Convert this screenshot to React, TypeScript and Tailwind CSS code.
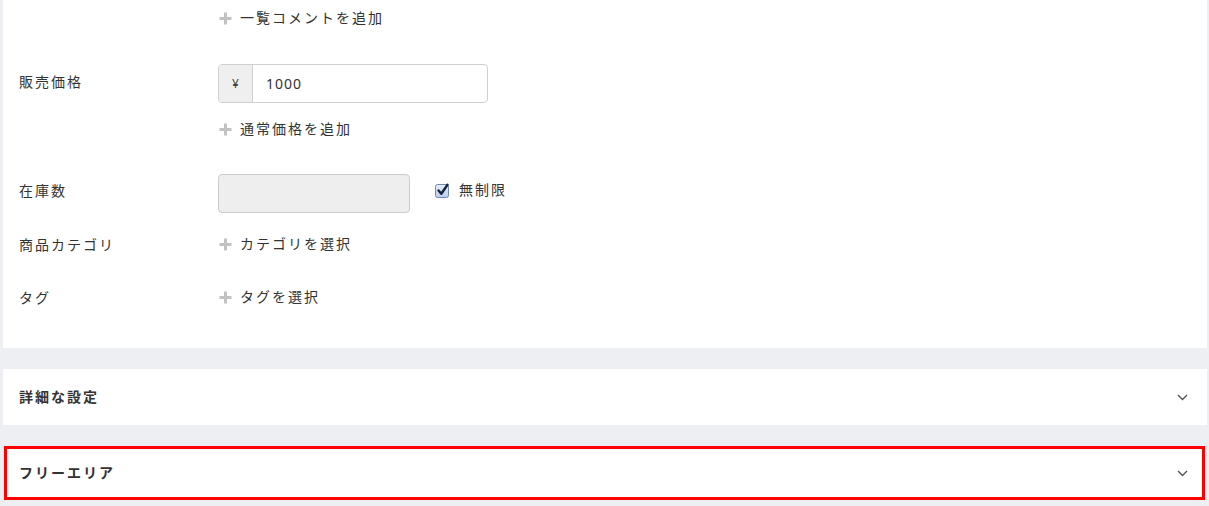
import React from "react";

const font = { fontFamily: '"Noto Sans", "Noto Sans CJK JP", sans-serif' };

function Plus() {
  return (
    <svg width="13" height="13" viewBox="0 0 13 13" className="shrink-0">
      <rect x="5" y="0.5" width="3" height="12" fill="#c2c2c2" />
      <rect x="0.5" y="5" width="12" height="3" fill="#c2c2c2" />
    </svg>
  );
}

function AddLink({ text }: { text: string }) {
  return (
    <div className="flex items-center gap-[8px] h-[20px] text-[14px] leading-[20px] text-[#333] pl-px">
      <Plus />
      <span>{text}</span>
    </div>
  );
}

function Chevron() {
  return (
    <svg width="11" height="7" viewBox="0 0 11 7">
      <polyline points="1,1 5.5,5.5 10,1" fill="none" stroke="#555" strokeWidth="1.4" />
    </svg>
  );
}

function Check() {
  return (
    <svg width="15" height="15" viewBox="0 0 15 15">
      <defs>
        <linearGradient id="cb" x1="0" y1="0" x2="0" y2="1">
          <stop offset="0" stopColor="#e6eefa" />
          <stop offset="1" stopColor="#b9cdea" />
        </linearGradient>
      </defs>
      <rect x="0.5" y="1.5" width="13" height="13" rx="2" fill="url(#cb)" stroke="#6f88b0" />
      <polyline points="3.5,7.5 6.3,10.8 12.5,1.8" fill="none" stroke="#14233f" strokeWidth="2.4" strokeLinecap="round" strokeLinejoin="round" />
    </svg>
  );
}

export default function App() {
  return (
    <div className="w-[1209px] h-[506px] bg-[#eeeff3] overflow-hidden text-[#333] tracking-[2px]" style={font}>
      <div className="ml-[3px] mr-[2px] bg-white h-[348px] pt-[8px] pl-[16px]">
        <div className="flex">
          <div className="w-[199px] shrink-0" />
          <AddLink text="一覧コメントを追加" />
        </div>

        <div className="flex mt-[36px]">
          <div className="w-[199px] shrink-0 text-[14px] leading-[20px] mt-[8px]">販売価格</div>
          <div className="flex flex-col">
            <div className="flex w-[270px] h-[39px] border border-[#cfcfcf] rounded-[4px] overflow-hidden">
              <div className="w-[34px] bg-[#efefef] border-r border-[#cfcfcf] flex items-center justify-center text-[12px] text-[#444] tracking-normal">¥</div>
              <div className="flex-1 flex items-center pl-[13px] text-[14px] text-[#333] tracking-[1px]">1000</div>
            </div>
            <div className="mt-[16px]">
              <AddLink text="通常価格を追加" />
            </div>
          </div>
        </div>

        <div className="flex mt-[35px] items-start">
          <div className="w-[199px] shrink-0 text-[14px] leading-[20px] mt-[7px]">在庫数</div>
          <div className="w-[192px] h-[39px] bg-[#eeeeee] border border-[#cccccc] rounded-[4px]" />
          <div className="flex items-center gap-[9px] ml-[25px] mt-[6px] text-[14px] leading-[20px]">
            <Check />
            <span>無制限</span>
          </div>
        </div>

        <div className="flex mt-[21px]">
          <div className="w-[199px] shrink-0 text-[14px] leading-[20px] mt-px">商品カテゴリ</div>
          <AddLink text="カテゴリを選択" />
        </div>

        <div className="flex mt-[32px]">
          <div className="w-[199px] shrink-0 text-[14px] leading-[20px] mt-px">タグ</div>
          <AddLink text="タグを選択" />
        </div>
      </div>

      <div className="ml-[3px] mr-[2px] mt-[21px] bg-white h-[56px] flex items-center justify-between pl-[16px] pr-[19px]">
        <span className="text-[14px] leading-[20px] mb-px font-bold text-[#333]">詳細な設定</span>
        <Chevron />
      </div>

      <div className="ml-[4px] mr-[4px] mt-[21px] bg-white h-[54px] border-[3px] border-[#ff0000] flex items-center justify-between pl-[12px] pr-[14px]">
        <span className="text-[14px] leading-[20px] font-bold text-[#333]">フリーエリア</span>
        <Chevron />
      </div>
    </div>
  );
}
